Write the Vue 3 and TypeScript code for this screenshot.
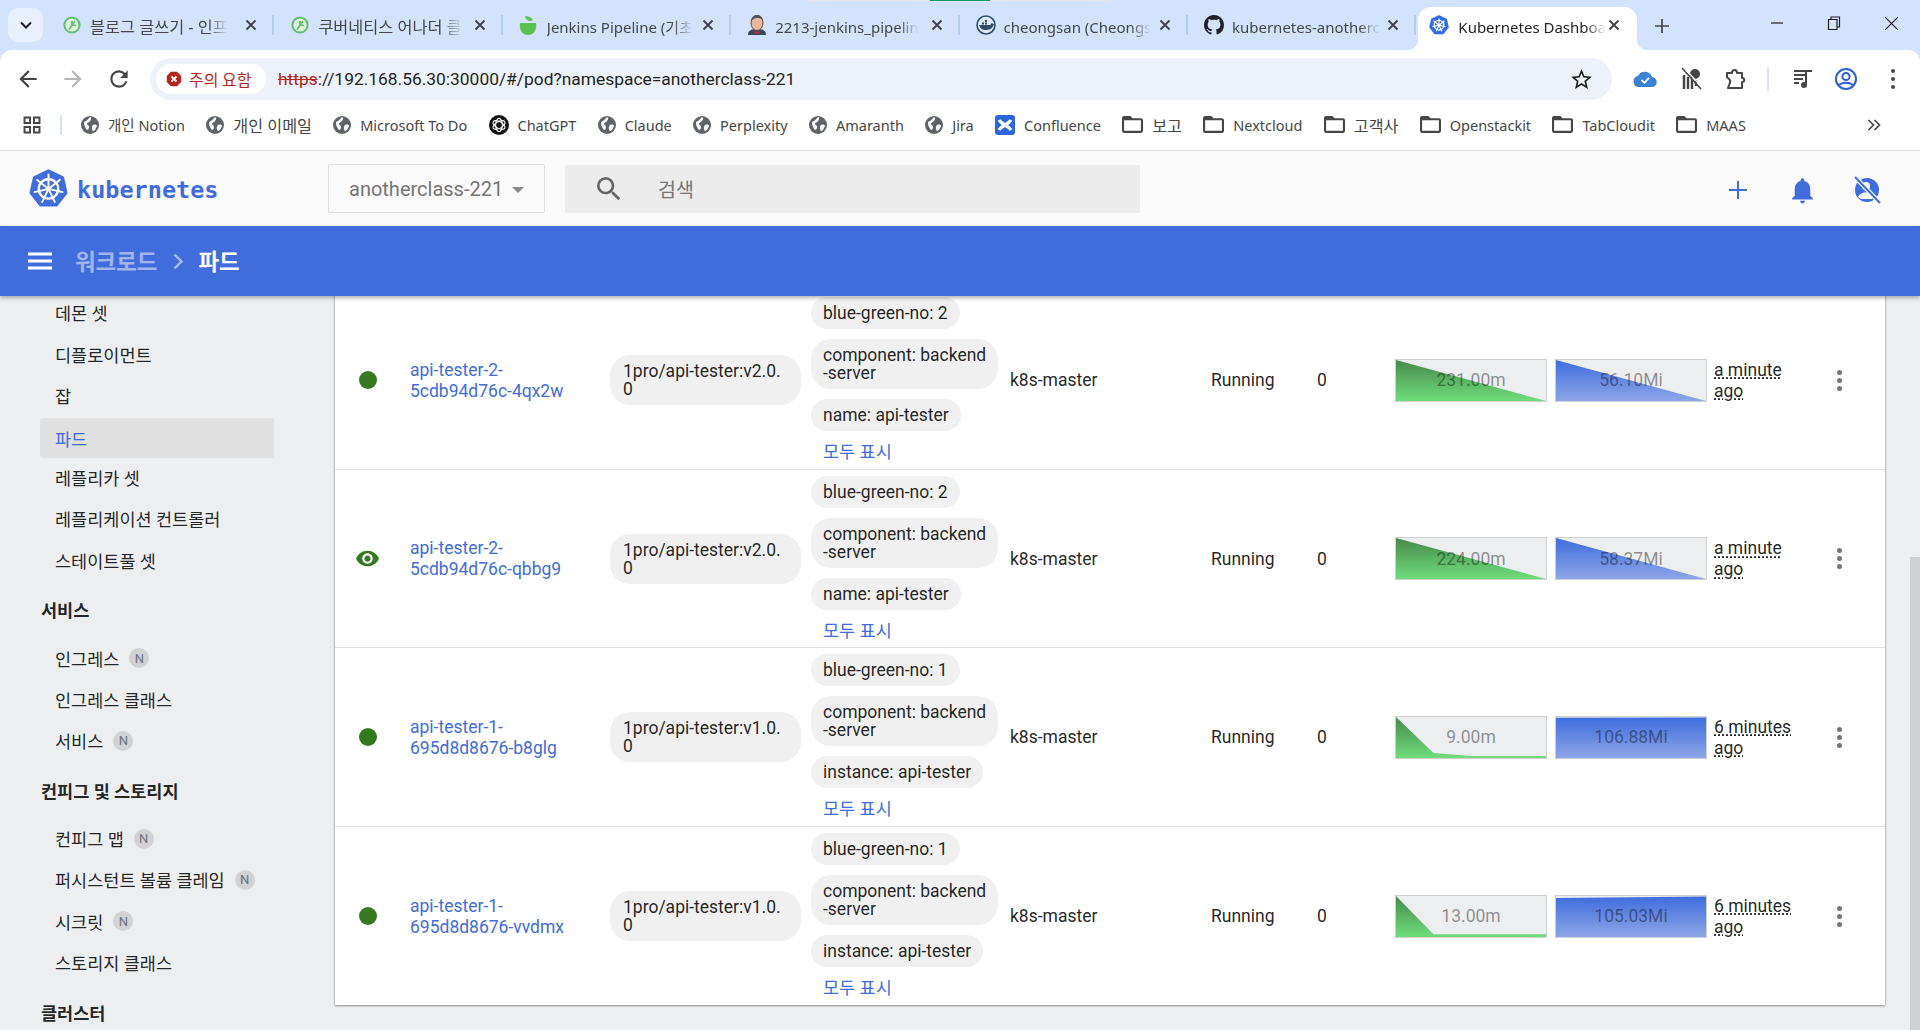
<script setup lang="ts">
type Fav = 'leaf' | 'pipeline' | 'butler' | 'docker' | 'github' | 'k8s'
const tabs: { title: string; fav: Fav; active?: boolean; ko?: boolean }[] = [
  { title: '블로그 글쓰기 - 인프', fav: 'leaf', ko: true },
  { title: '쿠버네티스 어나더 클', fav: 'leaf', ko: true },
  { title: 'Jenkins Pipeline (기초', fav: 'pipeline' },
  { title: '2213-jenkins_pipelin', fav: 'butler' },
  { title: 'cheongsan (Cheongs', fav: 'docker' },
  { title: 'kubernetes-anotherc', fav: 'github' },
  { title: 'Kubernetes Dashboa', fav: 'k8s', active: true }
]
const bookmarks: { label: string; icon: string; ko?: boolean }[] = [
  { label: '개인 Notion', icon: 'globe' },
  { label: '개인 이메일', icon: 'globe', ko: true },
  { label: 'Microsoft To Do', icon: 'globe' },
  { label: 'ChatGPT', icon: 'gpt' },
  { label: 'Claude', icon: 'globe' },
  { label: 'Perplexity', icon: 'globe' },
  { label: 'Amaranth', icon: 'globe' },
  { label: 'Jira', icon: 'globe' },
  { label: 'Confluence', icon: 'conf' },
  { label: '보고', icon: 'folder', ko: true },
  { label: 'Nextcloud', icon: 'folder' },
  { label: '고객사', icon: 'folder', ko: true },
  { label: 'Openstackit', icon: 'folder' },
  { label: 'TabCloudit', icon: 'folder' },
  { label: 'MAAS', icon: 'folder' }
]
const nav: { label: string; bold?: boolean; active?: boolean; n?: boolean }[] = [
  { label: '데몬 셋' },
  { label: '디플로이먼트' },
  { label: '잡' },
  { label: '파드', active: true },
  { label: '레플리카 셋' },
  { label: '레플리케이션 컨트롤러' },
  { label: '스테이트풀 셋' },
  { label: '서비스', bold: true },
  { label: '인그레스', n: true },
  { label: '인그레스 클래스' },
  { label: '서비스', n: true },
  { label: '컨피그 및 스토리지', bold: true },
  { label: '컨피그 맵', n: true },
  { label: '퍼시스턴트 볼륨 클레임', n: true },
  { label: '시크릿', n: true },
  { label: '스토리지 클래스' },
  { label: '클러스터', bold: true }
]
const pods = [
  { name: 'api-tester-2-\n5cdb94d76c-4qx2w', eye: false, image: '1pro/api-tester:v2.0.\n0', no: 2, third: 'name: api-tester', cpu: '231.00m', mem: '56.10Mi', cpuPts: '0,0 100,100 0,100', memPts: '0,0 100,100 0,100', age: 'a minute ago' },
  { name: 'api-tester-2-\n5cdb94d76c-qbbg9', eye: true, image: '1pro/api-tester:v2.0.\n0', no: 2, third: 'name: api-tester', cpu: '224.00m', mem: '58.37Mi', cpuPts: '0,0 100,100 0,100', memPts: '0,0 100,100 0,100', age: 'a minute ago' },
  { name: 'api-tester-1-\n695d8d8676-b8glg', eye: false, image: '1pro/api-tester:v1.0.\n0', no: 1, third: 'instance: api-tester', cpu: '9.00m', mem: '106.88Mi', cpuPts: '0,0 25,88 50,95 100,95 100,100 0,100', memPts: '0,2 100,1 100,100 0,100', age: '6 minutes ago' },
  { name: 'api-tester-1-\n695d8d8676-vvdmx', eye: false, image: '1pro/api-tester:v1.0.\n0', no: 1, third: 'instance: api-tester', cpu: '13.00m', mem: '105.03Mi', cpuPts: '0,0 25,93 100,93 100,100 0,100', memPts: '0,5 100,1 100,100 0,100', age: '6 minutes ago' }
]
const heptagon = Array.from({ length: 7 }, (_, i) => {
  const a = (-90 + (360 / 7) * i) * (Math.PI / 180)
  return `${(50 + 46 * Math.cos(a)).toFixed(1)},${(51 + 46 * Math.sin(a)).toFixed(1)}`
}).join(' ')
const spokes = Array.from({ length: 7 }, (_, i) => (360 / 7) * i)
</script>

<template>
  <div class="page">
    <div class="capture"><span class="capture-green"></span></div>

    <div class="tabstrip">
      <button class="tab-menu" type="button">
        <svg viewBox="0 0 12 8" width="12" height="8"><path d="M1 1.5l5 5 5-5" fill="none" stroke="#1f1f1f" stroke-width="2" /></svg>
      </button>
      <div v-for="t in tabs" :key="t.title" class="tab" :class="{ active: t.active, ko: t.ko }">
        <svg v-if="t.fav === 'leaf'" class="fav" viewBox="0 0 20 20">
          <circle cx="10" cy="10" r="7.6" fill="#dff3e0" stroke="#5fbf6b" stroke-width="2" />
          <path d="M7 14.5L13 6M10 10V6M10 10l4 .5" fill="none" stroke="#5fbf6b" stroke-width="1.7" />
        </svg>
        <svg v-else-if="t.fav === 'pipeline'" class="fav" viewBox="0 0 20 20">
          <path d="M1 8h16c1 5-1 12-8 12S0 13 1 8z" fill="#5cc24f" />
          <path d="M6 1c4 0 6 1 8 4-3 2-7 1-8-4z" fill="#5cc24f" />
        </svg>
        <svg v-else-if="t.fav === 'butler'" class="fav" viewBox="0 0 20 20">
          <path d="M1 20c0-5 4-6 9-6s9 1 9 6z" fill="#36495c" />
          <ellipse cx="10" cy="8" rx="6" ry="7.5" fill="#e8b9a0" stroke="#6d4a3a" stroke-width="1" />
          <path d="M4 7c0-5 3-7 6-7s6 2 6 6c-2-3-3-3-6-3S6 4 4 7z" fill="#555" />
          <path d="M7 16l3 1 3-1-1 3-2-1-2 1z" fill="#c9302c" />
        </svg>
        <svg v-else-if="t.fav === 'docker'" class="fav" viewBox="0 0 20 20">
          <circle cx="10" cy="10" r="9" fill="#dfe9f4" stroke="#2d4a66" stroke-width="1.6" />
          <path d="M3 10h11c1 0 1-2 2-2 .5 1 2 1 2 1-1 3-3 6-8 6-4 0-6-2-7-5z" fill="#2d4a66" />
          <path d="M6 7.5h2v2H6zM9 7.5h2v2H9zM9 5h2v2H9z" fill="#2d4a66" />
        </svg>
        <svg v-else-if="t.fav === 'github'" class="fav" viewBox="0 0 16 16">
          <path fill="#1f2328" d="M8 0C3.58 0 0 3.58 0 8c0 3.54 2.29 6.53 5.47 7.59.4.07.55-.17.55-.38 0-.19-.01-.82-.01-1.49-2.01.37-2.53-.49-2.69-.94-.09-.23-.48-.94-.82-1.13-.28-.15-.68-.52-.01-.53.63-.01 1.08.58 1.23.82.72 1.21 1.87.87 2.33.66.07-.52.28-.87.51-1.07-1.78-.2-3.64-.89-3.64-3.95 0-.87.31-1.59.82-2.15-.08-.2-.36-1.02.08-2.12 0 0 .67-.21 2.2.82.64-.18 1.32-.27 2-.27.68 0 1.36.09 2 .27 1.53-1.04 2.2-.82 2.2-.82.44 1.1.16 1.92.08 2.12.51.56.82 1.27.82 2.15 0 3.07-1.87 3.75-3.65 3.95.29.25.54.73.54 1.48 0 1.07-.01 1.93-.01 2.2 0 .21.15.46.55.38A8.013 8.013 0 0 0 16 8c0-4.42-3.58-8-8-8z" />
        </svg>
        <svg v-else class="fav" viewBox="0 0 100 100">
          <polygon :points="heptagon" fill="#326ce5" stroke="#326ce5" stroke-width="8" stroke-linejoin="round" />
          <circle cx="50" cy="51" r="24" fill="none" stroke="#fff" stroke-width="7" />
          <g v-for="s in spokes" :key="s" :transform="`rotate(${s} 50 51)`"><path d="M50 51V17" stroke="#fff" stroke-width="6" /></g>
        </svg>
        <span class="tab-title">{{ t.title }}</span>
        <svg class="tab-close" viewBox="0 0 12 12" width="12" height="12"><path d="M1.5 1.5l9 9M10.5 1.5l-9 9" stroke="#3c4043" stroke-width="1.8" /></svg>
      </div>
      <svg class="new-tab" viewBox="0 0 16 16" width="16" height="16"><path d="M8 1v14M1 8h14" stroke="#444746" stroke-width="1.7" /></svg>
      <div class="win">
        <svg viewBox="0 0 14 14" width="14" height="14"><path d="M1 7h12" stroke="#1f1f1f" stroke-width="1.2" /></svg>
        <svg viewBox="0 0 14 14" width="14" height="16"><path d="M1.5 3.5h8.5v10H1.5zM4 3.5V1h8.5v10H10" fill="none" stroke="#1f1f1f" stroke-width="1.2" /></svg>
        <svg viewBox="0 0 14 14" width="15" height="15"><path d="M1 1l12 12M13 1L1 13" stroke="#1f1f1f" stroke-width="1.1" /></svg>
      </div>
    </div>

    <div class="toolbar">
      <svg class="tb-icon back" viewBox="0 0 24 24"><path fill="#444746" d="M20 11H7.83l5.59-5.59L12 4l-8 8 8 8 1.41-1.41L7.83 13H20v-2z" /></svg>
      <svg class="tb-icon fwd" viewBox="0 0 24 24"><path fill="#b4b6b8" d="M12 4l-1.41 1.41L16.17 11H4v2h12.17l-5.58 5.59L12 20l8-8z" /></svg>
      <svg class="tb-icon reload" viewBox="0 0 24 24"><path fill="#444746" d="M17.65 6.35A7.958 7.958 0 0 0 12 4c-4.42 0-7.99 3.58-7.99 8s3.57 8 7.99 8c3.73 0 6.84-2.55 7.73-6h-2.08A5.99 5.99 0 0 1 12 18c-3.31 0-6-2.69-6-6s2.69-6 6-6c1.66 0 3.14.69 4.22 1.78L13 11h7V4l-2.35 2.35z" /></svg>
      <div class="omnibox">
        <div class="sec-chip">
          <svg viewBox="0 0 16 16" width="16" height="16"><path d="M5 .8h6L15.2 5v6L11 15.2H5L.8 11V5z" fill="#b3261e" /><path d="M5.5 5.5l5 5M10.5 5.5l-5 5" stroke="#fff" stroke-width="1.8" /></svg>
          <span>주의 요함</span>
        </div>
        <div class="url"><span class="https">https</span>://192.168.56.30:30000/#/pod?namespace=anotherclass-221</div>
        <svg class="star" viewBox="0 0 24 24"><path fill="#1f1f1f" d="M22 9.24l-7.19-.62L12 2 9.19 8.63 2 9.24l5.46 4.73L5.82 21 12 17.27 18.18 21l-1.63-7.03L22 9.24zM12 15.4l-3.76 2.27 1-4.28-3.32-2.88 4.38-.38L12 6.1l1.71 4.04 4.38.38-3.32 2.88 1 4.28L12 15.4z" /></svg>
      </div>
      <div class="ext">
        <svg class="e1" viewBox="0 0 24 18" width="24" height="18"><path fill="#3b82d6" d="M6 17a5.5 5.5 0 0 1-1-10.9A7.5 7.5 0 0 1 19 7a5 5 0 0 1-.5 10z" /><path d="M8.5 10l3 2.8 4.5-5" fill="none" stroke="#fff" stroke-width="1.8" /></svg>
        <svg class="e2" viewBox="0 0 22 24" width="22" height="24"><circle cx="15" cy="7" r="5" fill="#444" /><path d="M4 8v14M8 10v12M12 12v10M16 13v6" stroke="#444" stroke-width="2.4" /><path d="M2 1l19 21" stroke="#444" stroke-width="1.6" /><path d="M4.5 1l18 20" stroke="#fff" stroke-width="1.2" /></svg>
        <svg class="e3" viewBox="0 0 22 22" width="22" height="22"><path d="M3 5h5c0-4 5-4 5 0h5v5c3 0 3 4 0 4v6H4l1.5-4c1-2 1-4-.5-5L3 9z" fill="none" stroke="#444746" stroke-width="2" stroke-linejoin="round" /></svg>
        <span class="ext-sep"></span>
        <svg class="e4" viewBox="0 0 22 20" width="22" height="20"><path d="M1 2h13M1 6h13M1 10h9M1 14h5" stroke="#444746" stroke-width="2" /><circle cx="11" cy="16" r="3" fill="#444746" /><path d="M13 16V2h6" fill="none" stroke="#444746" stroke-width="2" /></svg>
        <svg class="e5" viewBox="0 0 24 24" width="24" height="24"><circle cx="12" cy="12" r="10" fill="none" stroke="#2d5fd3" stroke-width="2" /><circle cx="12" cy="9.5" r="3.6" fill="none" stroke="#2d5fd3" stroke-width="2" /><path d="M5.5 18c2-3 11-3 13 0" fill="none" stroke="#2d5fd3" stroke-width="2" /></svg>
        <svg class="e6" viewBox="0 0 6 22" width="6" height="22"><circle cx="3" cy="3" r="2" fill="#444746" /><circle cx="3" cy="11" r="2" fill="#444746" /><circle cx="3" cy="19" r="2" fill="#444746" /></svg>
      </div>
    </div>

    <div class="bookmarks">
      <svg class="apps" viewBox="0 0 18 18" width="18" height="18"><path d="M1.5 1.5h5.5v5.5H1.5zM11 1.5h5.5v5.5H11zM1.5 11h5.5v5.5H1.5zM11 11h5.5v5.5H11z" fill="none" stroke="#444746" stroke-width="1.9" /></svg>
      <span class="bm-sep"></span>
      <div class="bm-list">
        <div v-for="b in bookmarks" :key="b.label" class="bm" :class="{ ko: b.ko }">
          <svg v-if="b.icon === 'globe'" viewBox="0 0 18 18" width="18" height="18">
            <circle cx="9" cy="9" r="9" fill="#5f6368" />
            <path d="M3 6c3-1 5-4 6-5 2 1 1 3 0 4-1 2-3 1-3 3 0 1 2 1 2 3s-1 3-2 3C4 12 3 9 3 6zM12 9c2-1 4 0 4 1-1 3-3 5-4 5-1-1-2-4 0-6z" fill="#fff" />
          </svg>
          <svg v-else-if="b.icon === 'gpt'" viewBox="0 0 18 18" width="20" height="20">
            <circle cx="9" cy="9" r="9" fill="#111" />
            <g v-for="r in [0, 60, 120]" :key="r" :transform="`rotate(${r} 9 9)`"><ellipse cx="9" cy="9" rx="3" ry="6" fill="none" stroke="#fff" stroke-width="1" /></g>
          </svg>
          <svg v-else-if="b.icon === 'conf'" viewBox="0 0 20 20" width="20" height="20">
            <rect width="20" height="20" rx="3" fill="#2c66dc" />
            <path d="M4 5c3 5 9 5 12 10M16 5c-3 5-9 5-12 10" fill="none" stroke="#fff" stroke-width="3.4" />
          </svg>
          <svg v-else viewBox="2 3 20 18" width="21" height="19"><path fill="#444746" d="M20 6h-8l-2-2H4c-1.1 0-2 .9-2 2v12c0 1.1.9 2 2 2h16c1.1 0 2-.9 2-2V8c0-1.1-.9-2-2-2zm0 12H4V8h16v10z" /></svg>
          <span>{{ b.label }}</span>
        </div>
      </div>
      <svg class="more" viewBox="0 0 14 12" width="14" height="12"><path d="M1.5 1l5 5-5 5M7.5 1l5 5-5 5" fill="none" stroke="#444746" stroke-width="1.7" /></svg>
    </div>

    <header class="k-top">
      <svg class="k-logo" viewBox="0 0 100 100">
        <polygon :points="heptagon" fill="#416cdc" stroke="#416cdc" stroke-width="8" stroke-linejoin="round" />
        <circle cx="50" cy="51" r="25" fill="none" stroke="#fff" stroke-width="6" />
        <circle cx="50" cy="51" r="6" fill="#fff" />
        <g v-for="s in spokes" :key="s" :transform="`rotate(${s} 50 51)`"><path d="M50 51V14" stroke="#fff" stroke-width="5" stroke-linecap="round" /></g>
      </svg>
      <span class="k-word">kubernetes</span>
      <div class="ns">
        <span>anotherclass-221</span>
        <i class="caret"></i>
      </div>
      <div class="search">
        <svg viewBox="0 0 24 24" width="32" height="32"><path fill="#666" d="M15.5 14h-.79l-.28-.27A6.47 6.47 0 0 0 16 9.5 6.5 6.5 0 1 0 9.5 16c1.61 0 3.09-.59 4.23-1.57l.27.28v.79l5 4.99L20.49 19l-4.99-5zm-6 0C7.01 14 5 11.99 5 9.5S7.01 5 9.5 5 14 7.01 14 9.5 11.99 14 9.5 14z" /></svg>
        <span>검색</span>
      </div>
      <div class="k-actions">
        <svg class="a-plus" viewBox="0 0 18 18" width="18" height="18"><path d="M9 0v18M0 9h18" stroke="#416cdc" stroke-width="2" /></svg>
        <svg class="a-bell" viewBox="0 0 24 24" width="31" height="31"><path fill="#416cdc" d="M12 22c1.1 0 2-.9 2-2h-4c0 1.1.9 2 2 2zm6-6v-5c0-3.07-1.63-5.64-4.5-6.32V4c0-.83-.67-1.5-1.5-1.5s-1.5.67-1.5 1.5v.68C7.64 5.36 6 7.92 6 11v5l-2 2v1h16v-1l-2-2z" /></svg>
        <svg class="a-user" viewBox="0 0 30 30" width="30" height="30">
          <circle cx="15" cy="15" r="12" fill="#416cdc" />
          <circle cx="14" cy="11" r="4" fill="#fafafa" />
          <path d="M6 22c3-6 13-6 17-1l-3 3H9z" fill="#fafafa" />
          <path d="M3 2l25 26" stroke="#fafafa" stroke-width="4.5" />
          <path d="M3 2l25 26" stroke="#416cdc" stroke-width="2" />
        </svg>
      </div>
    </header>

    <div class="k-bar">
      <svg viewBox="0 0 24 18" width="24" height="18"><path d="M0 2h24M0 9h24M0 16h24" stroke="#fff" stroke-width="3" /></svg>
      <span class="crumb">워크로드</span>
      <svg class="crumb-sep" viewBox="0 0 10 16" width="10" height="19"><path d="M1.5 1l7 7-7 7" fill="none" stroke="#fff" stroke-opacity=".55" stroke-width="2.4" /></svg>
      <span class="crumb now">파드</span>
    </div>

    <div class="body">
      <nav class="side">
        <template v-for="(n, i) in nav" :key="i">
          <div v-if="n.bold" class="sec">{{ n.label }}</div>
          <div v-else class="item" :class="{ active: n.active }">
            <span>{{ n.label }}</span>
            <b v-if="n.n" class="nbadge">N</b>
          </div>
        </template>
      </nav>
      <main class="main">
        <section class="card">
          <div v-for="p in pods" :key="p.name" class="row">
            <div class="c-status">
              <svg v-if="p.eye" viewBox="0 0 24 24" width="25" height="25"><path fill="#34791f" d="M12 4.5C7 4.5 2.73 7.61 1 12c1.73 4.39 6 7.5 11 7.5s9.27-3.11 11-7.5c-1.73-4.39-6-7.5-11-7.5zM12 17c-2.76 0-5-2.24-5-5s2.24-5 5-5 5 2.24 5 5-2.24 5-5 5zm0-8c-1.66 0-3 1.34-3 3s1.34 3 3 3 3-1.34 3-3-1.34-3-3-3z" /></svg>
              <i v-else class="dot"></i>
            </div>
            <a class="name">{{ p.name }}</a>
            <div><span class="chip image">{{ p.image }}</span></div>
            <div class="labels">
              <span class="chip">blue-green-no: {{ p.no }}</span>
              <span class="chip">{{ 'component: backend\n-server' }}</span>
              <span class="chip">{{ p.third }}</span>
              <a class="show">모두 표시</a>
            </div>
            <div>k8s-master</div>
            <div>Running</div>
            <div>0</div>
            <div class="spark">
              <svg viewBox="0 0 100 100" preserveAspectRatio="none">
                <defs><linearGradient id="gg" x1="0" y1="0" x2="0" y2="1"><stop offset="0" stop-color="#468a4a" /><stop offset="1" stop-color="#70dd7c" /></linearGradient></defs>
                <polygon :points="p.cpuPts" fill="url(#gg)" />
              </svg>
              <span>{{ p.cpu }}</span>
            </div>
            <div class="spark">
              <svg viewBox="0 0 100 100" preserveAspectRatio="none">
                <defs><linearGradient id="gb" x1="0" y1="0" x2="0" y2="1"><stop offset="0" stop-color="#3f6ddd" /><stop offset="1" stop-color="#8da6e8" /></linearGradient></defs>
                <polygon :points="p.memPts" fill="url(#gb)" />
              </svg>
              <span>{{ p.mem }}</span>
            </div>
            <div class="age"><span>{{ p.age }}</span></div>
            <div class="menu"><i></i><i></i><i></i></div>
          </div>
        </section>
      </main>
      <div class="scroll"><span class="thumb"></span></div>
    </div>
  </div>
</template>

<style>
html, body { margin: 0; background: #eceef0; overflow: hidden; }
</style>

<style scoped>
.page {
  width: 1920px; height: 1030px; display: flex; flex-direction: column; overflow: hidden;
  position: relative; background: #d3e3fd;
  font-family: Roboto, "Noto Sans CJK KR", sans-serif; color: rgba(0, 0, 0, .87);
}
.capture { position: absolute; left: 808px; top: 0; width: 302px; height: 1px; background: #e4e4e4; }
.capture-green { position: absolute; left: 122px; top: 0; width: 60px; height: 1px; background: #0f9d58; }

.tabstrip { height: 50px; flex: none; display: flex; align-items: flex-end; padding-left: 8px; }
.tab-menu {
  width: 35px; height: 34px; margin: 0 3px 8px 0; padding: 0; border: 0; border-radius: 10px; background: #e9f0fd;
  display: flex; align-items: center; justify-content: center; flex: none;
}
.tab {
  width: 228.4px; height: 43px; flex: none; box-sizing: border-box; display: flex; align-items: center; padding: 0 11px 7px 16px;
  position: relative; font: 15px "Noto Sans", "Noto Sans CJK KR", sans-serif; color: #444746;
}
.tab.ko { font-size: 16.3px; }
.tab::after { content: ""; position: absolute; right: 0; top: 8px; height: 20px; width: 2px; background: #b5cdf6; }
.fav { width: 20px; height: 20px; flex: none; margin-right: 8px; }
.tab-title {
  flex: 0 1 auto; min-width: 0; white-space: nowrap; overflow: hidden; line-height: 20px; padding-top: 3px;
  -webkit-mask-image: linear-gradient(90deg, #000 86%, transparent);
  mask-image: linear-gradient(90deg, #000 86%, transparent);
}
.tab-close { margin-left: auto; margin-right: 6px; flex: none; }
.tab.active { background: #fff; border-radius: 13px 13px 0 0; color: #1f1f1f; width: 219px; margin-left: 2px; padding-left: 11px; }
.tab.active::before {
  content: ""; position: absolute; left: -11px; bottom: 0; width: 11px; height: 11px;
  background: radial-gradient(circle at 0 0, transparent 11px, #fff 11.5px);
}
.tab.active::after {
  right: -11px; top: auto; bottom: 0; width: 11px; height: 11px;
  background: radial-gradient(circle at 100% 0, transparent 11px, #fff 11.5px);
}
.tab.active .fav { margin-right: 9px; }
.new-tab { margin: 0 0 16px 17px; flex: none; }
.win { margin-left: auto; display: flex; align-items: center; gap: 43px; padding: 0 21px 0 0; height: 50px; }
.win svg { margin-bottom: 4px; }

.toolbar {
  height: 58px; flex: none; background: #fff; border-radius: 12px 12px 0 0; display: flex; align-items: center; padding-left: 15px;
}
.tb-icon { width: 26px; height: 26px; flex: none; }
.fwd { margin-left: 19px; }
.reload { margin-left: 20px; }
.omnibox {
  margin-left: 18px; width: 1462px; height: 42px; flex: none; border-radius: 21px; background: #edf2fa;
  display: flex; align-items: center; padding: 0 18px 0 6px; box-sizing: border-box;
}
.sec-chip {
  height: 30px; width: 110px; flex: none; box-sizing: border-box; border-radius: 15px; background: #fff; display: flex; align-items: center; gap: 7px;
  padding-left: 10px; color: #b3261e; font: 16px "Noto Sans CJK KR", sans-serif;
}
.url { margin-left: 12px; font: 17.4px Roboto, sans-serif; color: #1f1f1f; flex: 1; white-space: nowrap; }
.https { color: #b3261e; text-decoration: line-through; }
.star { width: 25px; height: 25px; flex: none; }
.ext { display: flex; align-items: center; flex: none; width: 295px; padding-left: 21px; box-sizing: border-box; }
.e2 { margin-left: 23px; }
.e3 { margin-left: 22px; }
.ext-sep { width: 2px; height: 24px; background: #d3e3fd; margin-left: 21px; }
.e4 { margin-left: 24px; }
.e5 { margin-left: 19px; }
.e6 { margin-left: 32px; }

.bookmarks {
  height: 42px; flex: none; background: #fff; display: flex; align-items: center; padding: 0 39px 9px 23px; box-sizing: border-box;
  font: 14.5px "Noto Sans", "Noto Sans CJK KR", sans-serif; color: #444746;
}
.bm-sep { width: 2px; height: 20px; background: #d3e3fd; margin: 0 19px; flex: none; }
.bm-list { display: flex; align-items: center; flex: none; gap: 21.3px; }
.bm { display: flex; align-items: center; gap: 9px; white-space: nowrap; }
.bm.ko { font-size: 16.2px; }
.bm svg { flex: none; }
.more { margin-left: auto; flex: none; }

.k-top {
  height: 76px; flex: none; background: #fafafa; border-top: 1px solid #e3e3e3; box-sizing: border-box; display: flex; align-items: center; padding-left: 29px;
}
.k-logo { width: 39px; height: 39px; flex: none; }
.k-word { margin: 2px 0 0 9px; width: 141px; flex: none; font: 700 23.5px "DejaVu Sans Mono", monospace; color: #416cdc; }
.ns {
  margin-left: 110px; width: 217px; height: 49px; flex: none; box-sizing: border-box; border: 1px solid #dedede; border-radius: 2px;
  display: flex; align-items: center; padding-left: 20px; font-size: 20px; color: #757575; gap: 9px;
}
.caret { width: 0; height: 0; border-left: 6px solid transparent; border-right: 6px solid transparent; border-top: 6px solid #8a8a8a; margin-top: 2px; }
.search {
  margin-left: 20px; width: 575px; height: 48px; flex: none; background: #ececec; border-radius: 2px; display: flex; align-items: center;
  box-sizing: border-box; padding-left: 28px; font-size: 19.5px; color: #757575; gap: 33px;
}
.k-actions { margin: 3px 0 0 auto; display: flex; align-items: center; padding-right: 38px; }
.a-bell { margin-left: 39.5px; }
.a-user { margin-left: 34.5px; }

.k-bar {
  height: 70px; flex: none; background: #416cdc; display: flex; align-items: center; padding-left: 28px; position: relative; z-index: 2;
  box-shadow: 0 2px 4px rgba(0, 0, 0, .3);
}
.crumb { font-size: 22.4px; font-weight: 700; color: rgba(255, 255, 255, .5); margin: 0 0 2px 23px; white-space: nowrap; }
.crumb-sep { margin: 0 15px 0 16px; flex: none; }
.crumb.now { color: #fff; margin-left: 0; }

.body { flex: 1; min-height: 0; display: flex; background: #eceef0; overflow: hidden; position: relative; }
.side { width: 335px; flex: none; box-sizing: border-box; margin-top: -3.7px; padding-left: 40px; font-size: 17.5px; }
.item {
  height: 41.2px; width: 234px; box-sizing: border-box; padding-left: 15px; display: flex; align-items: center; gap: 10px; border-radius: 3px; white-space: nowrap;
}
.item.active { background: #e0e0e0; color: #416cdc; height: 40px; margin: 2.4px 0 -1.2px; }
.sec { height: 57px; box-sizing: border-box; padding: 1.4px 0 0 1px; display: flex; align-items: center; font-weight: 700; white-space: nowrap; }
.nbadge { width: 20px; height: 20px; border-radius: 50%; background: #d2d2d2; color: #6b7280; font: 400 13px Roboto, sans-serif; display: flex; align-items: center; justify-content: center; }

.main { width: 1550px; flex: none; }
.card { margin-top: -4.6px; background: #fff; box-shadow: 0 0 2px rgba(0, 0, 0, .25), 0 1px 2px rgba(0, 0, 0, .35); font-size: 17.5px; }
.row {
  display: grid; grid-template-columns: 75px 200px 201px 199px 201px 106px 78px 160px 159px 110px 61px; align-items: center;
  box-sizing: border-box; height: 178.5px; border-bottom: 1px solid #e0e0e0;
}
.row:last-child { border-bottom: 0; }
.c-status { display: flex; justify-content: center; padding-right: 10px; }
.dot { width: 18px; height: 18px; border-radius: 50%; background: #34791f; }
.name { color: #416cdc; white-space: pre-line; line-height: 21px; padding-top: 1px; }
.chip {
  display: inline-block; box-sizing: border-box; background: #f0f0f0; border-radius: 20px; padding: 7px 12px; line-height: 18px; white-space: pre-line; max-width: 192px;
}
.chip.image { padding: 7px 13px; width: 191px; max-width: 191px; }
.labels { display: flex; flex-direction: column; align-items: flex-start; gap: 10px; }
.show { color: #416cdc; font-size: 17.5px; line-height: 22px; padding-left: 12px; }
.spark { position: relative; width: 152px; height: 43px; box-sizing: border-box; border: 1px solid #cfcfcf; background: #eceef0; }
.spark svg { display: block; width: 100%; height: 100%; }
.spark span { position: absolute; inset: 0; display: flex; align-items: center; justify-content: center; font-size: 17.5px; color: rgba(0, 0, 0, .42); }
.age { line-height: 21px; padding: 1px 20px 0 0; }
.age span { text-decoration: underline dotted; text-underline-offset: 2px; }
.menu { display: flex; flex-direction: column; align-items: center; gap: 3px; padding-right: 30px; }
.menu i { width: 5px; height: 5px; border-radius: 50%; background: #757575; }

.scroll { flex: 1; position: relative; }
.thumb { position: absolute; right: 0; top: 261px; bottom: 0; width: 10px; background: #cdcfd2; }
</style>
